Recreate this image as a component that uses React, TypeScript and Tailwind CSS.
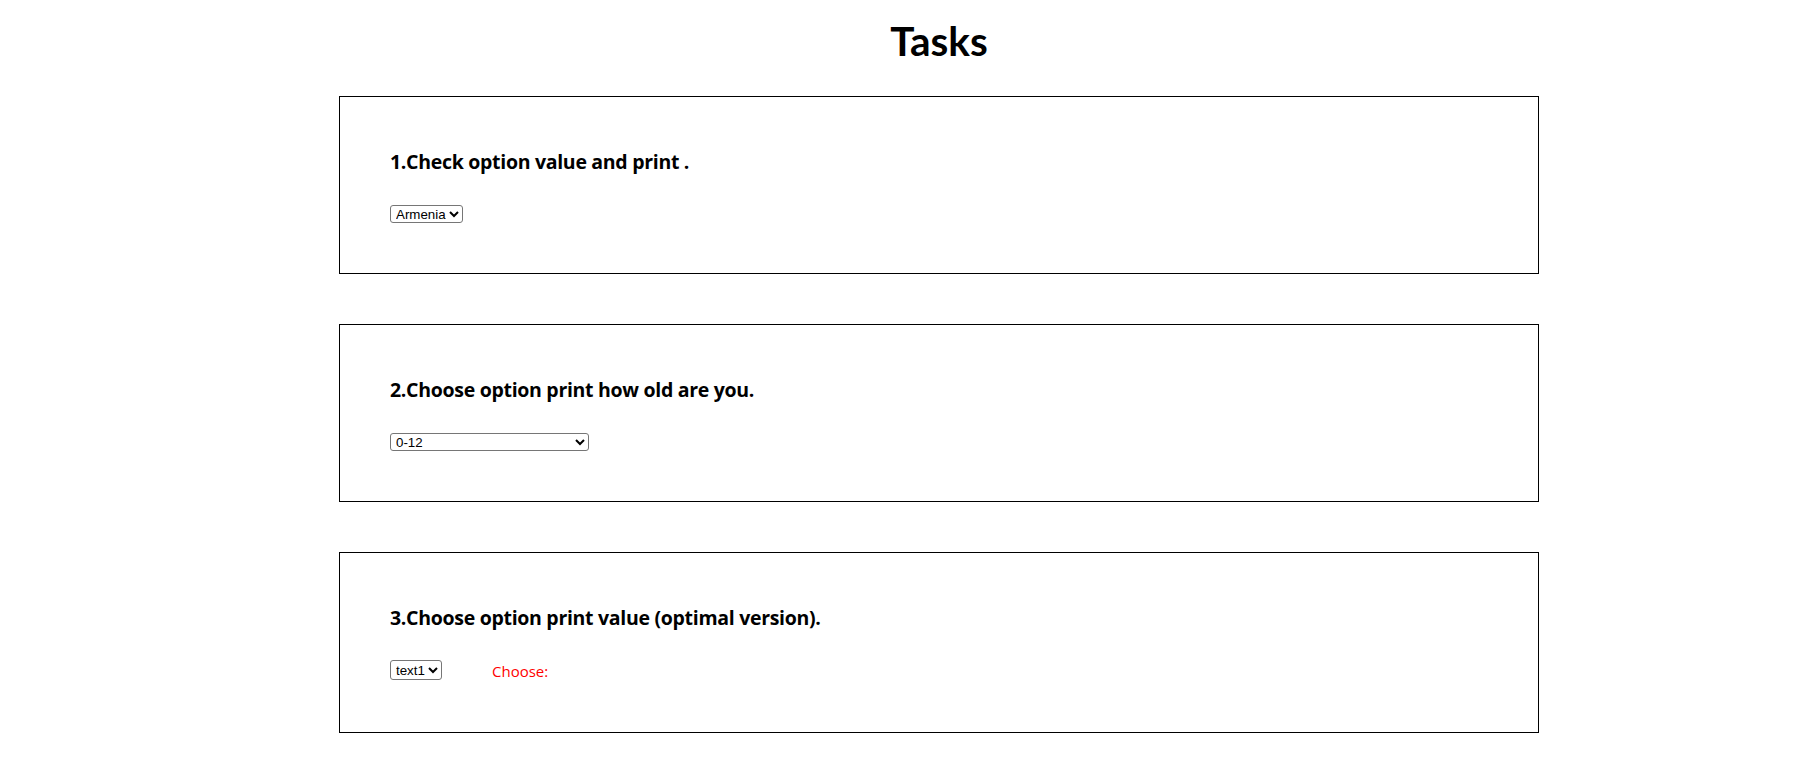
import React from "react";

const selectCls =
  "border border-[#767676] rounded-[3px] bg-white text-black pl-[1px] font-['Liberation_Sans',Arial,sans-serif] text-[13.33px] leading-[16px]";

function Heading({ children }: { children: React.ReactNode }) {
  return (
    <h4 className="font-['Open_Sans',sans-serif] font-bold text-[19.5px] leading-[24px] tracking-[-0.3px] text-black">
      {children}
    </h4>
  );
}

export default function App() {
  return (
    <div className="min-h-screen bg-white pt-[17px]">
      <div className="ml-[339px] w-[1200px]">
        <h1 className="text-center font-['Lato',sans-serif] font-bold text-[40.5px] leading-[47px] text-black">
          Tasks
        </h1>

        <div className="mt-[32px] flex flex-col gap-[50px]">
          <section className="border border-black pl-[50px] pt-[53px] pb-[50px]">
            <Heading>1.Check option value and print .</Heading>
            <div className="mt-[31px] flex">
              <select className={`${selectCls} w-[73px] h-[18px]`} defaultValue="Armenia">
                <option value="Armenia">Armenia</option>
                <option value="Georgia">Georgia</option>
                <option value="Russia">Russia</option>
              </select>
            </div>
          </section>

          <section className="border border-black pl-[50px] pt-[53px] pb-[50px]">
            <Heading>2.Choose option print how old are you.</Heading>
            <div className="mt-[31px] flex">
              <select className={`${selectCls} w-[199px] h-[18px]`} defaultValue="0-12">
                <option value="0-12">0-12</option>
                <option value="13-18">13-18</option>
                <option value="19-30">19-30</option>
              </select>
            </div>
          </section>

          <section className="border border-black pl-[50px] pt-[53px] pb-[51px]">
            <Heading>3.Choose option print value (optimal version).</Heading>
            <div className="mt-[30px] flex items-start">
              <select className={`${selectCls} w-[52px] h-[20px]`} defaultValue="text1">
                <option value="text1">text1</option>
                <option value="text2">text2</option>
                <option value="text3">text3</option>
              </select>
              <span className="ml-[50px] mt-[1px] font-['Open_Sans',sans-serif] text-[15px] leading-[20px] text-[#ff0000]">
                Choose:
              </span>
            </div>
          </section>
        </div>
      </div>
    </div>
  );
}
